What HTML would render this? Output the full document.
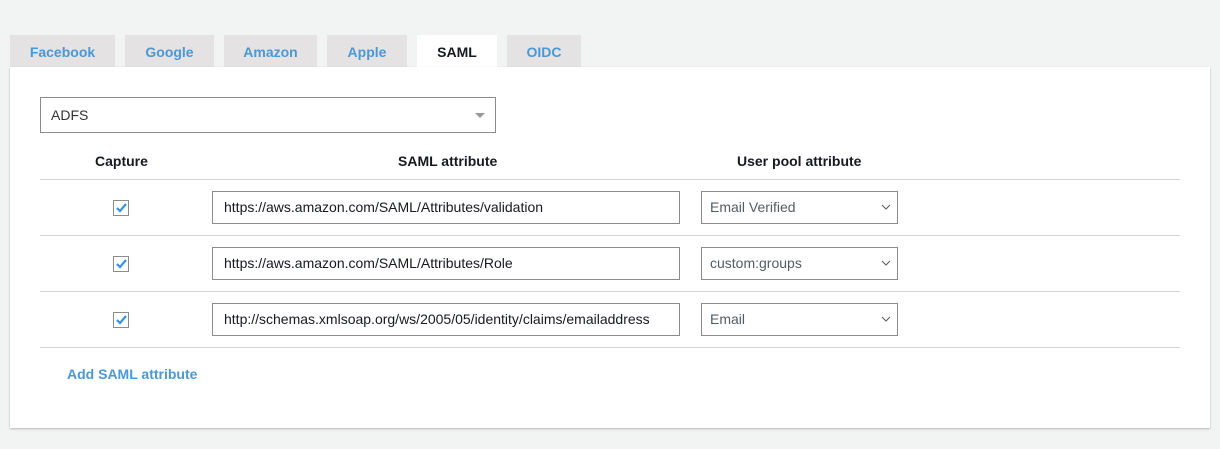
<!DOCTYPE html><html><head><style>
body{margin:0;width:1220px;height:449px;background:#f2f3f3;font-family:"Liberation Sans",Arial,sans-serif;position:relative;overflow:hidden}
.tab{position:absolute;top:35px;height:32px;background:#e4e2e3;color:#4a98d5;font-weight:bold;font-size:14px;line-height:35px;text-align:center}
.tab.act{background:#fff;color:#16191f}
.panel{position:absolute;left:10px;top:67px;width:1200px;height:361px;background:#fff;box-shadow:0 1px 2px rgba(0,0,0,.25)}
.abs{position:absolute}
.sel{position:absolute;left:40px;top:97px;width:454px;height:34px;border:1px solid #8c8c8c;font-size:14px;line-height:34px;color:#333}
.sel span{margin-left:10px}
.tri{position:absolute;right:10px;top:15px;border-left:5px solid transparent;border-right:5px solid transparent;border-top:5px solid #999}
.hd{position:absolute;top:153px;font-weight:bold;font-size:14px;color:#16191f}
.line{position:absolute;left:40px;width:1140px;height:1px;background:#d5d5d5}
.cb{position:absolute;left:113px;width:14px;height:14px;border:1px solid #8c8c8c;background:#fff}
.inp{position:absolute;left:212px;width:455px;height:31px;border:1px solid #8c8c8c;font-size:14px;line-height:31px;padding-left:11px;color:#16191f}
.dd{position:absolute;left:701px;width:187px;height:31px;border:1px solid #8c8c8c;font-size:14px;line-height:31px;padding-left:8px;color:#545b64}
.dd svg{position:absolute;right:6px;top:12px}
</style></head><body>
<div class="tab" style="left:10px;width:105px">Facebook</div>
<div class="tab" style="left:125px;width:89px">Google</div>
<div class="tab" style="left:224px;width:93px">Amazon</div>
<div class="tab" style="left:327px;width:80px">Apple</div>
<div class="tab act" style="left:417px;width:80px">SAML</div>
<div class="tab" style="left:507px;width:74px">OIDC</div>
<div class="panel"></div>
<div class="sel"><span>ADFS</span><div class="tri"></div></div>
<div class="hd" style="left:95px">Capture</div>
<div class="hd" style="left:398px">SAML attribute</div>
<div class="hd" style="left:737px">User pool attribute</div>
<div class="line" style="top:179px"></div>
<div class="line" style="top:235px"></div>
<div class="line" style="top:291px"></div>
<div class="line" style="top:347px"></div>

<div class="cb" style="top:200px"><svg width="14" height="14"><path d="M3 7l3 3 6-7" stroke="#3b8fdb" stroke-width="2.2" fill="none"/></svg></div>
<div class="inp" style="top:191px">https://aws.amazon.com/SAML/Attributes/validation</div>
<div class="dd" style="top:191px">Email Verified<svg width="10" height="7"><path d="M1 1l4 4 4-4" stroke="#545b64" fill="none"/></svg></div>

<div class="cb" style="top:256px"><svg width="14" height="14"><path d="M3 7l3 3 6-7" stroke="#3b8fdb" stroke-width="2.2" fill="none"/></svg></div>
<div class="inp" style="top:247px">https://aws.amazon.com/SAML/Attributes/Role</div>
<div class="dd" style="top:247px">custom:groups<svg width="10" height="7"><path d="M1 1l4 4 4-4" stroke="#545b64" fill="none"/></svg></div>

<div class="cb" style="top:312px"><svg width="14" height="14"><path d="M3 7l3 3 6-7" stroke="#3b8fdb" stroke-width="2.2" fill="none"/></svg></div>
<div class="inp" style="top:303px">http://schemas.xmlsoap.org/ws/2005/05/identity/claims/emailaddress</div>
<div class="dd" style="top:303px">Email<svg width="10" height="7"><path d="M1 1l4 4 4-4" stroke="#545b64" fill="none"/></svg></div>

<div class="abs" style="left:67px;top:366px;font-weight:bold;font-size:14px;color:#4a98d5">Add SAML attribute</div>
</body></html>
